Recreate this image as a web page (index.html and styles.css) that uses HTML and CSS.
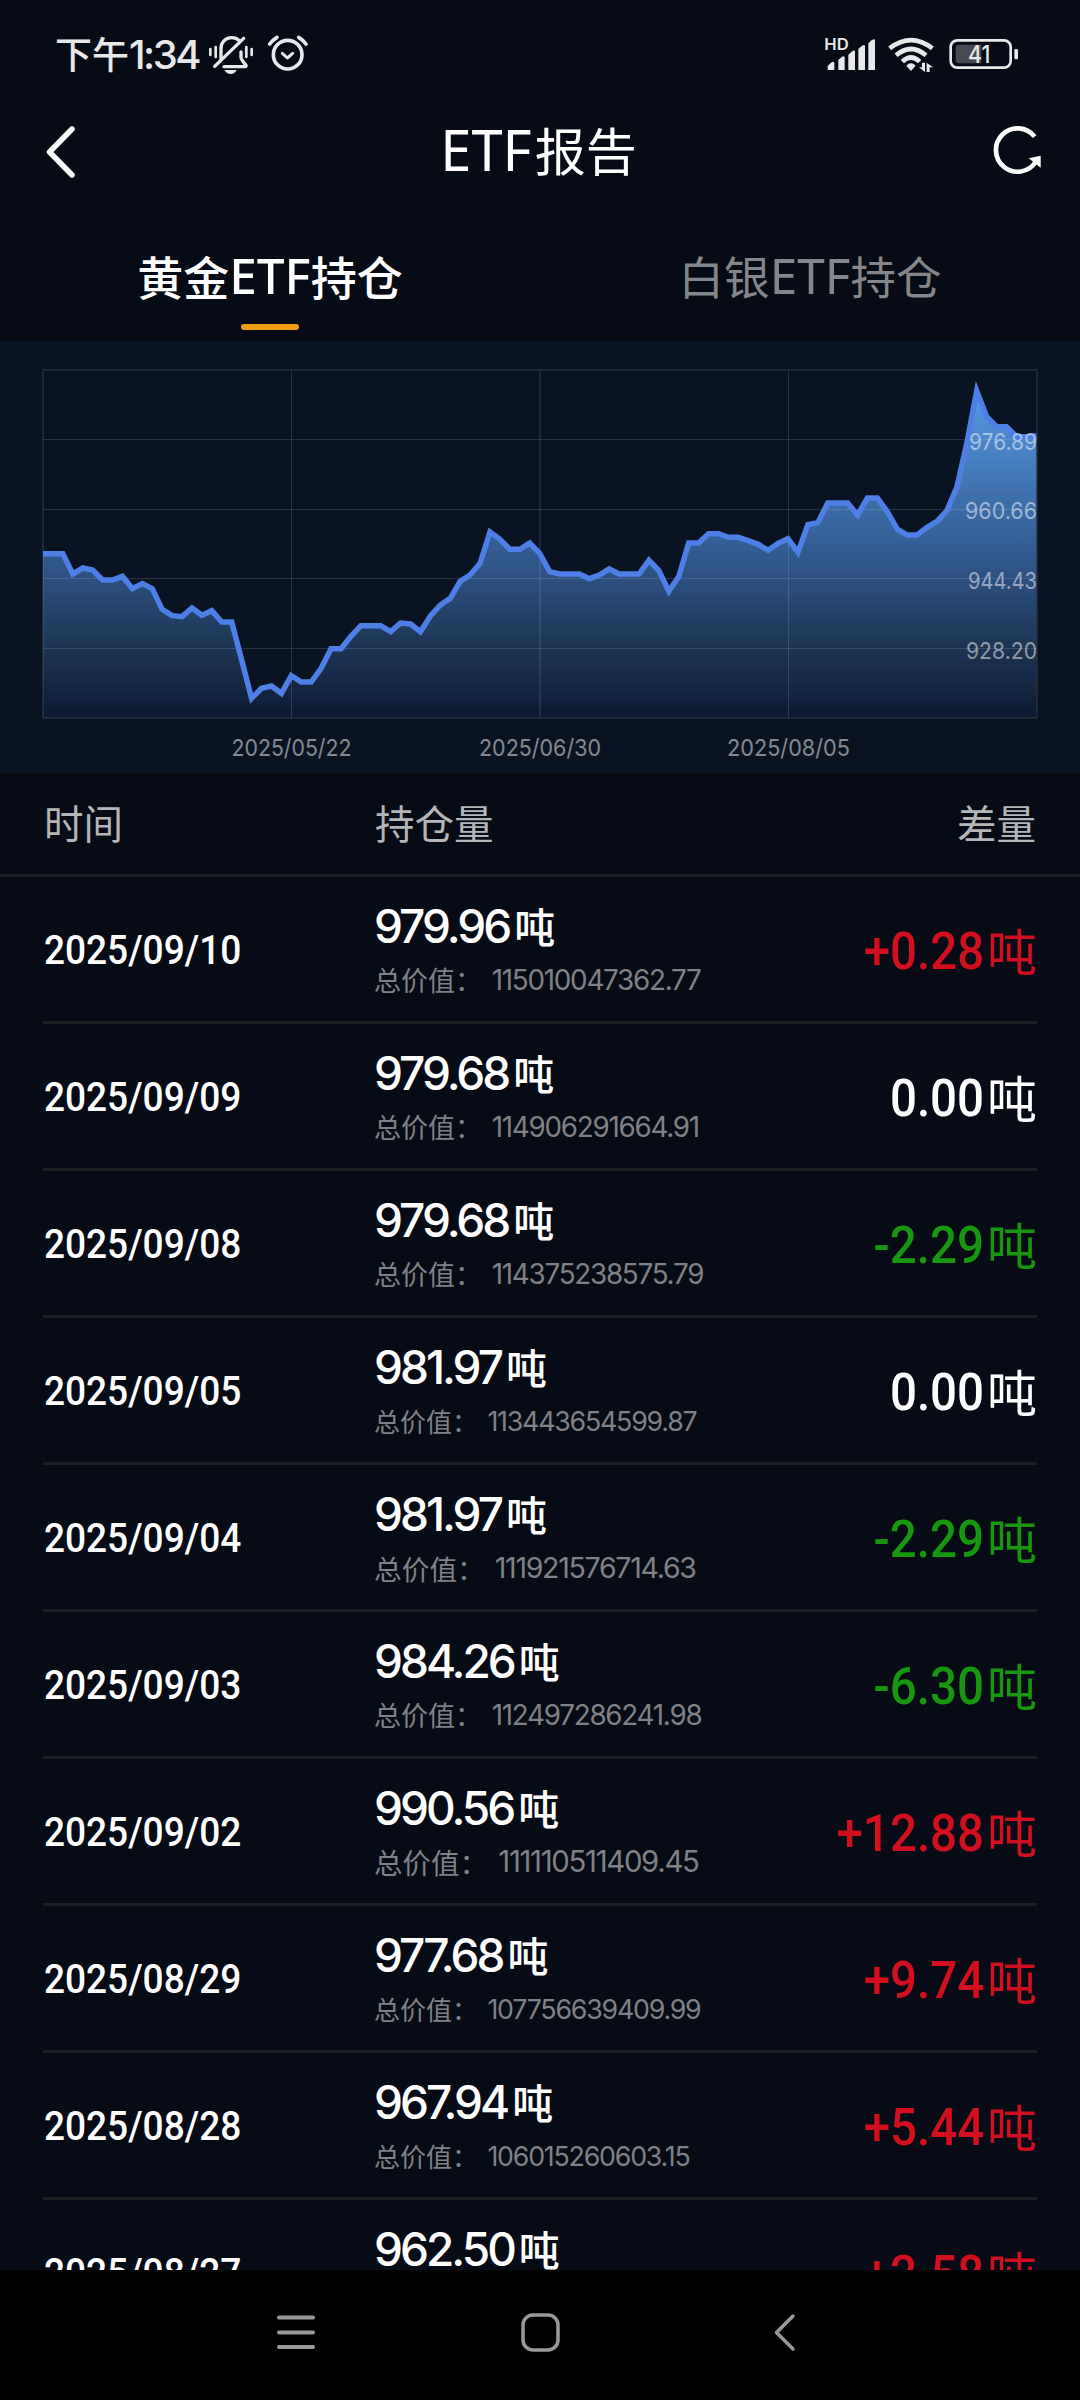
FILE: index.html
```html
<!DOCTYPE html>
<html lang="zh-CN">

<head>
  <meta charset="UTF-8">
  <meta name="viewport" content="width=device-width, initial-scale=1.0">
  <title>ETF报告</title>
  <link rel="stylesheet" href="styles.css">
</head>

<body>
  <!-- 状态栏 -->
  <div class="status">
    <div class="time">下午<span>1:34</span></div>
    <svg class="status-left" viewBox="0 0 360 150">
      <g class="line">
        <path d="M63 88V56C63 36 77 23 95 23C104 23 112 26 118 32" stroke-width="10" />
        <path d="M123 66V82C124 90 132 98 138 106Q140 110 134 110H72" stroke-width="10" />
        <path d="M44 109L131 25" stroke-width="10" />
        <path d="M31 57V75M47 51V81M139 51V81M155 57V75" stroke-width="8" />
        <circle cx="263" cy="74" r="43" stroke-width="11" />
        <path d="M209 42Q218 30 231 22M296 22Q309 30 318 42" stroke-width="11" />
        <path d="M247 70L262 84L278 70" stroke-width="9" />
      </g>
      <path class="solid" d="M73 120H110Q104 132 92 132Q80 132 73 120Z" />
    </svg>
    <svg class="status-right" viewBox="0 0 645 150">
      <text class="hd" x="28" y="60" textLength="73" lengthAdjust="spacingAndGlyphs">HD</text>
      <g class="solid">
        <path d="M38 108L48 98Q58 92 58 100V120H38Z" />
        <path d="M70 90L80 81Q89 76 89 84V120H70Z" />
        <path d="M100 74L110 65Q120 58 120 66V120H100Z" />
        <path d="M130 57L140 48Q150 41 150 49V120H130Z" />
        <path d="M160 40L170 31Q180 24 180 32V120H160Z" />
        <path d="M288 100Q296 100 302 107L288 123L274 107Q280 100 288 100Z" />
        <path d="M321 98H330V126L312 112H321ZM335 126V98L354 112H344V126Z" />
        <rect x="598" y="57" width="11" height="31" rx="4" />
      </g>
      <g class="line wifi">
        <path d="M224 55Q288 6 352 55" />
        <path d="M243 76Q288 38 333 76" />
        <path d="M262 95Q288 70 314 95" />
      </g>
      <rect class="line" x="407" y="31" width="180" height="82" rx="20" stroke-width="8" />
      <path class="level" d="M432 44H499V100H432Q422 100 422 90V54Q422 44 432 44Z" />
      <text class="battery" x="459" y="99" textLength="67" lengthAdjust="spacingAndGlyphs">41</text>
    </svg>
  </div>

  <!-- 标题栏 -->
  <header class="header">
    <svg class="back" viewBox="0 0 32 54">
      <path d="M27 4L4.500 27L27 50" />
    </svg>
    <h1><span>ETF</span>报告</h1>
    <svg class="refresh" viewBox="0 0 240 225">
      <path d="M164 68A65 65 0 1 0 167 144" />
      <polygon points="146,133 182,125 182,161" />
    </svg>
  </header>

  <nav class="tabs">
    <a class="tab active">黄金<span>ETF</span>持仓</a>
    <a class="tab">白银<span>ETF</span>持仓</a>
  </nav>

  <!-- 走势图 -->
  <section class="chart">
    <svg viewBox="0 0 1080 432">
      <defs>
        <linearGradient id="area" gradientUnits="userSpaceOnUse" x1="0" y1="120" x2="0" y2="1133">
          <stop offset="0" stop-color="#5aa0ee" />
          <stop offset=".22" stop-color="#4880c2" />
          <stop offset=".5" stop-color="#345c92" />
          <stop offset=".78" stop-color="#1d3655" />
          <stop offset="1" stop-color="#0c1a32" />
        </linearGradient>
      </defs>
      <g transform="translate(43 -1) scale(9.9333 .33333)">
        <polygon fill="url(#area)" points="0,641 1,641 2,641 3,702 4,684 5,690 6,720 7,720 8,709 9,746 10,731 11,746 12,808 13,827 14,830 15,804 16,826 17,812 18,846 19,846 20,960 21,1075 22,1045 23,1038 24,1060 25,1007 26,1026 27,1026 28,985 29,926 30,926 31,889 32,857 33,857 34,857 35,875 36,849 37,852 38,875 39,828 40,795 41,775 42,724 43,705 44,670 45,576 46,598 47,628 48,628 49,609 50,640 51,695 52,702 53,702 54,702 55,716 56,705 57,687 58,702 59,702 60,702 61,661 62,692 63,754 64,710 65,609 66,609 67,581 68,581 69,592 70,592 71,602 72,613 73,631 74,610 75,596 76,637 77,554 78,548 79,489 80,489 81,489 82,525 83,474 84,474 85,515 86,567 87,585 88,585 89,562 90,544 91,512 92,441 93,310 94,153 95,230 96,260 97,260 98,290 99,290 100,287 100,1133 0,1133" />
      </g>
      <g class="grid">
        <path d="M43 98.500H1037M43 168.500H1037M43 237.500H1037M43 307.500H1037M291.500 30V377M788.500 30V377" />
        <path class="bold" d="M43 29H1037V377H43ZM540 30V377" />
      </g>
      <g transform="translate(43 -1) scale(9.9333 .33333)">
        <polyline class="trend" points="0,641 1,641 2,641 3,702 4,684 5,690 6,720 7,720 8,709 9,746 10,731 11,746 12,808 13,827 14,830 15,804 16,826 17,812 18,846 19,846 20,960 21,1075 22,1045 23,1038 24,1060 25,1007 26,1026 27,1026 28,985 29,926 30,926 31,889 32,857 33,857 34,857 35,875 36,849 37,852 38,875 39,828 40,795 41,775 42,724 43,705 44,670 45,576 46,598 47,628 48,628 49,609 50,640 51,695 52,702 53,702 54,702 55,716 56,705 57,687 58,702 59,702 60,702 61,661 62,692 63,754 64,710 65,609 66,609 67,581 68,581 69,592 70,592 71,602 72,613 73,631 74,610 75,596 76,637 77,554 78,548 79,489 80,489 81,489 82,525 83,474 84,474 85,515 86,567 87,585 88,585 89,562 90,544 91,512 92,441 93,310 94,153 95,230 96,260 97,260 98,290 99,290 100,287" />
      </g>
      <g class="axis-y">
        <text x="969" y="109" textLength="68" lengthAdjust="spacingAndGlyphs">976.89</text>
        <text x="965" y="178" textLength="72" lengthAdjust="spacingAndGlyphs">960.66</text>
        <text x="968" y="248" textLength="69" lengthAdjust="spacingAndGlyphs">944.43</text>
        <text x="966" y="318" textLength="71" lengthAdjust="spacingAndGlyphs">928.20</text>
      </g>
      <g class="axis-x">
        <text x="231.500" y="415" textLength="120" lengthAdjust="spacingAndGlyphs">2025/05/22</text>
        <text x="479" y="415" textLength="122" lengthAdjust="spacingAndGlyphs">2025/06/30</text>
        <text x="727" y="415" textLength="123" lengthAdjust="spacingAndGlyphs">2025/08/05</text>
      </g>
    </svg>
  </section>

  <!-- 列表 -->
  <div class="row thead">
    <div>时间</div>
    <div>持仓量</div>
    <div>差量</div>
  </div>
  <ul class="list">
    <li class="row">
      <div class="date">2025/09/10</div>
      <div class="hold">
        <p class="amount">979.96<i>吨</i></p>
        <p class="total" style="font-size: 27px">总价值：<span>115010047362.77</span></p>
      </div>
      <div class="diff up"><b>+0.28</b>吨</div>
    </li>
    <li class="row">
      <div class="date">2025/09/09</div>
      <div class="hold">
        <p class="amount">979.68<i>吨</i></p>
        <p class="total" style="font-size: 27px">总价值：<span>114906291664.91</span></p>
      </div>
      <div class="diff"><b>0.00</b>吨</div>
    </li>
    <li class="row">
      <div class="date">2025/09/08</div>
      <div class="hold">
        <p class="amount">979.68<i>吨</i></p>
        <p class="total" style="font-size: 27px">总价值：<span>114375238575.79</span></p>
      </div>
      <div class="diff down"><b>-2.29</b>吨</div>
    </li>
    <li class="row">
      <div class="date">2025/09/05</div>
      <div class="hold">
        <p class="amount">981.97<i>吨</i></p>
        <p class="total" style="font-size: 26px">总价值：<span>113443654599.87</span></p>
      </div>
      <div class="diff"><b>0.00</b>吨</div>
    </li>
    <li class="row">
      <div class="date">2025/09/04</div>
      <div class="hold">
        <p class="amount">981.97<i>吨</i></p>
        <p class="total" style="font-size: 27.700px">总价值：<span>111921576714.63</span></p>
      </div>
      <div class="diff down"><b>-2.29</b>吨</div>
    </li>
    <li class="row">
      <div class="date">2025/09/03</div>
      <div class="hold">
        <p class="amount">984.26<i>吨</i></p>
        <p class="total" style="font-size: 27px">总价值：<span>112497286241.98</span></p>
      </div>
      <div class="diff down"><b>-6.30</b>吨</div>
    </li>
    <li class="row">
      <div class="date">2025/09/02</div>
      <div class="hold">
        <p class="amount">990.56<i>吨</i></p>
        <p class="total" style="font-size: 28.500px">总价值：<span>111110511409.45</span></p>
      </div>
      <div class="diff up"><b>+12.88</b>吨</div>
    </li>
    <li class="row">
      <div class="date">2025/08/29</div>
      <div class="hold">
        <p class="amount">977.68<i>吨</i></p>
        <p class="total" style="font-size: 26px">总价值：<span>107756639409.99</span></p>
      </div>
      <div class="diff up"><b>+9.74</b>吨</div>
    </li>
    <li class="row">
      <div class="date">2025/08/28</div>
      <div class="hold">
        <p class="amount">967.94<i>吨</i></p>
        <p class="total" style="font-size: 26px">总价值：<span>106015260603.15</span></p>
      </div>
      <div class="diff up"><b>+5.44</b>吨</div>
    </li>
    <li class="row">
      <div class="date">2025/08/27</div>
      <div class="hold">
        <p class="amount">962.50<i>吨</i></p>
      </div>
      <div class="diff up"><b>+2.58</b>吨</div>
    </li>
  </ul>

  <!-- 系统导航键 -->
  <footer class="keys">
    <svg viewBox="0 0 44 44">
      <path d="M5 7.500H39M5 22.500H39M5 37H39" stroke-width="4" />
    </svg>
    <svg viewBox="0 0 44 44">
      <rect x="5" y="5" width="35" height="35" rx="10" />
    </svg>
    <svg viewBox="0 0 44 44">
      <path d="M31 6L14.500 22.500L31 39" />
    </svg>
  </footer>
</body>

</html>
```

FILE: styles.css
```css
* {
  padding: 0;
  margin: 0;
  box-sizing: border-box;
}

body {
  display: flex;
  flex-direction: column;
  width: 1080px;
  height: 2400px;
  overflow: hidden;
  background: #070b15;
  color: #fff;
  font-family: "Noto Sans CJK SC", sans-serif;
}

svg {
  display: block;
  flex: none;
}

ul {
  list-style: none;
}

i {
  font-style: normal;
}

/* 状态栏 */
.status {
  display: flex;
  height: 108px;
  padding: 30px 50px 0 55px;
  color: #e8e8ea;
}

.time {
  width: 145px;
  font-size: 37px;
  font-weight: 500;
  line-height: 46px;
  white-space: nowrap;
}

.time span {
  font: 500 40px/46px Inter, sans-serif;
  letter-spacing: -2.5px;
}

.status-left {
  width: 120px;
  height: 50px;
}

.status-right {
  width: 215px;
  height: 50px;
  margin-left: auto;
}

.line {
  fill: none;
  stroke: #e8e8ea;
  stroke-linecap: round;
  stroke-linejoin: round;
}

.solid {
  fill: #e8e8ea;
}

.wifi {
  stroke-width: 14px;
  stroke-linecap: butt;
}

.level {
  fill: #464951;
}

.hd,
.battery {
  fill: #e8e8ea;
  font-family: Inter, sans-serif;
}

.hd {
  font-size: 48px;
  font-weight: 600;
}

.battery {
  font-size: 73px;
  font-weight: 500;
}

/* 标题栏 */
.header {
  display: flex;
  align-items: center;
  justify-content: space-between;
  height: 87px;
  padding: 0 20px 0 45px;
}

.header h1 {
  margin: -5px 0 0 20px;
  font-size: 51px;
  font-weight: 400;
  line-height: 80px;
}

.header h1 span {
  margin-right: 3px;
  font: 400 56px/80px "Noto Sans", sans-serif;
}

.back {
  width: 32px;
  height: 54px;
  fill: none;
  stroke: #fff;
  stroke-width: 5.500px;
  stroke-linecap: round;
  stroke-linejoin: round;
}

.refresh {
  width: 80px;
  height: 75px;
}

.refresh path {
  fill: none;
  stroke: #fff;
  stroke-width: 14px;
}

.refresh polygon {
  fill: #fff;
}

/* 切换 */
.tabs {
  display: flex;
  height: 146px;
}

.tab {
  display: flex;
  flex: 1;
  flex-flow: row wrap;
  align-content: flex-start;
  justify-content: center;
  padding-top: 45px;
  color: #84868b;
  font-size: 45.500px;
  line-height: 70px;
}

.tab span {
  font: 400 49.500px/70px "Noto Sans", sans-serif;
}

.tab.active {
  color: #fff;
  font-size: 46px;
  font-weight: 500;
}

.tab.active span {
  font-weight: 500;
}

.tab.active::after {
  content: "";
  width: 58px;
  height: 6px;
  margin: 14px 150px 0;
  border-radius: 3px;
  background: #f19d13;
}

/* 走势图 */
.chart {
  height: 432px;
  background: #0a1322;
}

.chart svg {
  width: 1080px;
  height: 432px;
}

.chart text {
  fill: rgba(255, 255, 255, .5);
  font-family: Inter, sans-serif;
  font-size: 23.500px;
}

.grid path {
  fill: none;
  stroke: rgba(190, 205, 230, .17);
}

.grid .bold {
  stroke: rgba(190, 205, 230, .11);
  stroke-width: 2px;
}

.trend {
  fill: none;
  stroke: #4d7fe6;
  stroke-width: 5.500px;
  vector-effect: non-scaling-stroke;
}

/* 列表 */
.row {
  display: grid;
  grid-template-columns: 331px 1fr auto;
  align-items: center;
  height: 147px;
  border-bottom: 3px solid #1d1e24;
}

.thead {
  height: 104px;
  padding: 0 44px 5px;
  color: #b4b5b8;
  font-size: 39.500px;
}

.list {
  flex: 1;
  min-height: 0;
  padding: 0 43px;
  overflow: hidden;
}

.date {
  padding: 2px 0 0 1px;
  font: 500 40.500px/48px Roboto, sans-serif;
  transform: scaleX(.915);
  transform-origin: left;
}

.hold {
  height: 144px;
  padding-top: 17px;
}

.amount {
  font: 500 46px/64px Inter, sans-serif;
  letter-spacing: -3px;
}

.amount i {
  margin-left: 5px;
  font: 500 41px/62px "Noto Sans CJK SC", sans-serif;
}

.total {
  display: flex;
  color: #7f8187;
  line-height: 44px;
}

.total span {
  margin-left: .35em;
  font-family: Inter, sans-serif;
  font-size: 1.030em;
  letter-spacing: -.045em;
}

.diff {
  display: flex;
  align-items: center;
  font-size: 50px;
  line-height: 68px;
}

.diff b {
  padding-top: 4px;
  margin-right: 3px;
  font: 500 52.500px/70px Roboto, sans-serif;
  transform: scaleX(.905);
  transform-origin: right;
}

.up {
  color: #d20f1e;
}

.down {
  color: #17960f;
}

/* 系统导航键 */
.keys {
  display: flex;
  flex: none;
  gap: 200px;
  justify-content: center;
  height: 130px;
  padding: 40px 1px 0 0;
  background: #000;
}

.keys svg {
  width: 44px;
  height: 44px;
  fill: none;
  stroke: #999;
  stroke-width: 3.500px;
  stroke-linecap: round;
  stroke-linejoin: round;
}
```
